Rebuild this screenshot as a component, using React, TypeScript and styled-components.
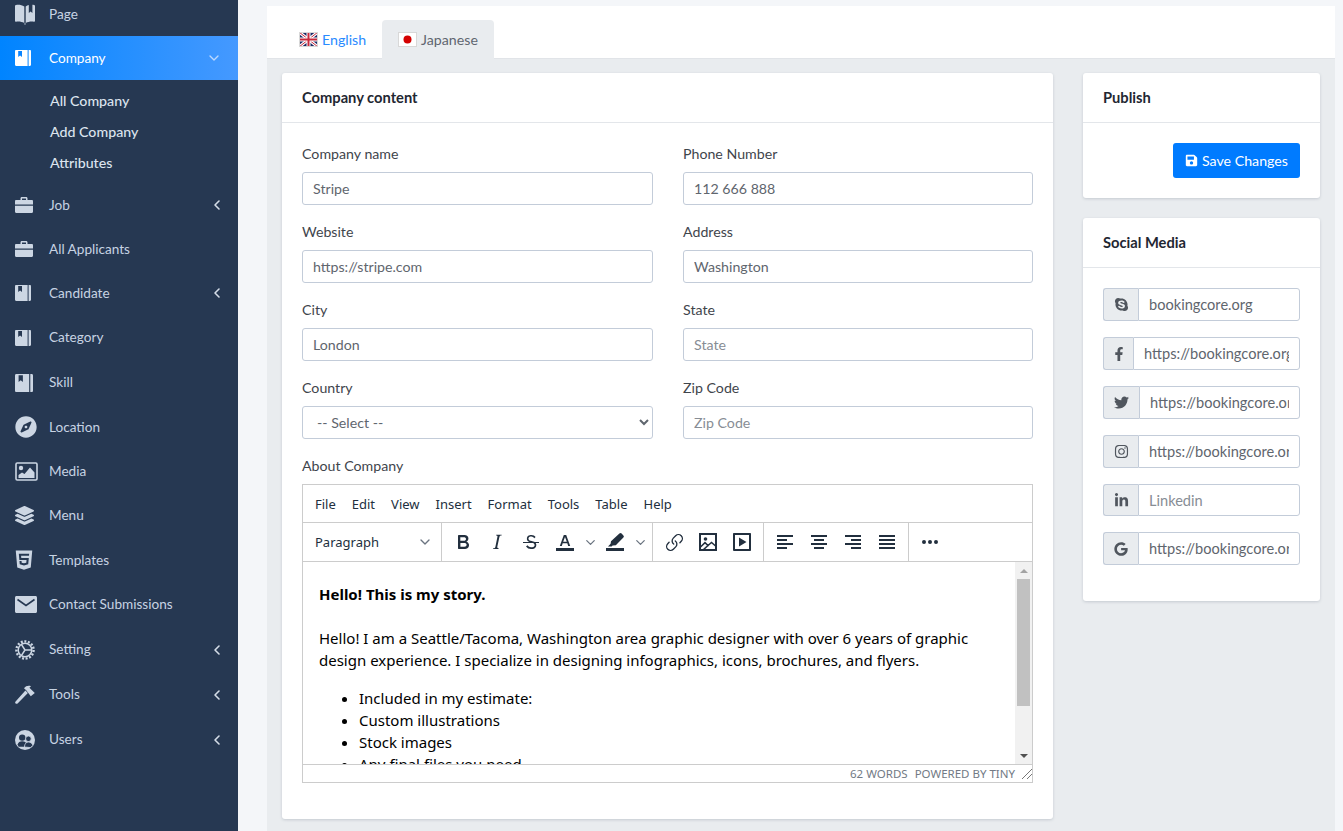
import React from 'react';
import styled, { createGlobalStyle } from 'styled-components';
import { ChevronDown, ChevronLeft, Link as LinkIcon } from 'lucide-react';
import {
  FaSkype,
  FaFacebookF,
  FaTwitter,
  FaInstagram,
  FaLinkedinIn,
  FaGoogle,
  FaCompass,
  FaLayerGroup,
  FaHtml5,
  FaSave,
} from 'react-icons/fa';

const UI_FONT = `Lato, "Noto Sans", sans-serif`;
const EDITOR_FONT = `"Noto Sans", "Open Sans", sans-serif`;
const ICON_COLOR = '#ccd6e3';
const TOOL_COLOR = '#222f3e';

const GlobalStyle = createGlobalStyle`
  html, body {
    margin: 0;
    height: 831px;
    overflow: hidden;
    background: #f4f6f9;
    font-family: ${UI_FONT};
    font-size: 14.2px;
    color: #3a3f45;
  }
  * { box-sizing: border-box; }
`;

const Shell = styled.div`
  display: flex;
  height: 831px;
  overflow: hidden;
`;

const Sidebar = styled.aside`
  width: 238px;
  flex: none;
  background: #263852;
  overflow: hidden;
`;

const NavList = styled.nav`
  margin-top: -8px;
`;

const NavRow = styled.div<{ $active?: boolean; $h?: number }>`
  display: flex;
  align-items: center;
  height: ${(p) => p.$h ?? 44}px;
  padding-left: 15px;
  color: ${(p) => (p.$active ? '#ffffff' : '#c7d3e3')};
  background: ${(p) =>
    p.$active ? 'linear-gradient(to right, #0084ff, #4599ff)' : 'transparent'};
`;

const NavIcon = styled.span<{ $active?: boolean }>`
  width: 34px;
  flex: none;
  display: flex;
  align-items: center;
  color: ${(p) => (p.$active ? '#ffffff' : ICON_COLOR)};
`;

const NavLabel = styled.span`
  flex: 1;
  align-self: flex-start;
  margin-top: 14px;
  font-size: 13.6px;
`;

const NavArrow = styled.span<{ $down?: boolean }>`
  display: flex;
  width: 16px;
  margin-right: ${(p) => (p.$down ? '16px' : '13px')};
  color: ${(p) => (p.$down ? '#bcd8ff' : '#d5dde8')};
`;

const SubNav = styled.div`
  padding: 5px 0;
`;

const SubItem = styled.div`
  height: 31px;
  line-height: 31px;
  padding-left: 50px;
  font-size: 14.2px;
  font-weight: 500;
  color: #dce4ee;
`;

const Main = styled.main`
  flex: 1;
  min-width: 0;
  padding: 6px 8px 0 29px;
`;

const Panel = styled.div`
  height: 900px;
  background: #e9ecef;
  border-radius: 3px 3px 0 0;
`;

const TabBar = styled.div`
  display: flex;
  height: 53px;
  padding: 14px 0 0 16px;
  background: #ffffff;
  border-bottom: 1px solid #e1e4e8;
`;

const Tab = styled.div<{ $active?: boolean }>`
  display: flex;
  align-items: center;
  gap: 4px;
  height: 39px;
  padding: 0 16px;
  border-radius: 4px 4px 0 0;
  font-size: 14.2px;
  color: ${(p) => (p.$active ? '#5f6670' : '#2a8bff')};
  background: ${(p) => (p.$active ? '#e9ecef' : 'transparent')};
`;

const Columns = styled.div`
  display: grid;
  grid-template-columns: 771px 237px;
  gap: 30px;
  padding: 14px 15px 15px;
  align-items: start;
`;

const SideColumn = styled.div`
  display: flex;
  flex-direction: column;
  gap: 20px;
`;

const Card = styled.section`
  background: #ffffff;
  border-radius: 3px;
  box-shadow: 0 1px 3px rgba(60, 70, 90, 0.2);
`;

const CardHead = styled.h2`
  margin: 0;
  height: 50px;
  padding: 0 20px;
  line-height: 49px;
  font-size: 14.7px;
  font-weight: 700;
  color: #1f2732;
  border-bottom: 1px solid #e3e6ea;
`;

const CardBody = styled.div`
  padding: 20px;
`;

const FormGrid = styled.div`
  display: grid;
  grid-template-columns: 351px 350px;
  column-gap: 30px;
`;

const Field = styled.div`
  margin-bottom: 16px;
`;

const Label = styled.label`
  display: block;
  height: 21px;
  line-height: 21px;
  margin-bottom: 8px;
  font-size: 14.2px;
  color: #3f454c;
`;

const TextInput = styled.input`
  display: block;
  width: 100%;
  height: 33px;
  padding: 0 10px;
  border: 1px solid #c3ccd9;
  border-radius: 3px;
  background: #ffffff;
  font-family: ${UI_FONT};
  font-size: 14.2px;
  color: #5f666e;
  outline: none;
  &::placeholder {
    color: #878d95;
    opacity: 1;
  }
`;

const SelectInput = styled.select`
  display: block;
  width: 100%;
  height: 33px;
  padding: 0 10px;
  border: 1px solid #c3ccd9;
  border-radius: 3px;
  background: #ffffff;
  font-family: ${UI_FONT};
  font-size: 14.2px;
  color: #5f666e;
`;

const Editor = styled.div`
  border: 1px solid #cccccc;
  font-family: ${EDITOR_FONT};
`;

const MenuBar = styled.div`
  display: flex;
  align-items: center;
  height: 38px;
  padding-left: 4px;
  border-bottom: 1px solid #cccccc;
`;

const MenuItem = styled.span`
  padding: 0 8px;
  font-size: 13px;
  color: #222f3e;
`;

const ToolBar = styled.div`
  display: flex;
  height: 39px;
  border-bottom: 1px solid #cccccc;
`;

const ToolGroup = styled.div<{ $w: number }>`
  display: flex;
  align-items: center;
  width: ${(p) => p.$w}px;
  padding: 0 4px;
  border-right: 1px solid #cccccc;
  &:last-child {
    border-right: none;
  }
`;

const BlockSelect = styled.div`
  display: flex;
  align-items: center;
  justify-content: space-between;
  width: 100%;
  padding: 0 4px 0 8px;
  font-size: 13px;
  color: #222f3e;
`;

const ToolBtn = styled.span`
  display: flex;
  align-items: center;
  justify-content: center;
  width: 34px;
  height: 34px;
  flex: none;
  color: ${TOOL_COLOR};
`;

const ToolChevron = styled.span`
  display: flex;
  align-items: center;
  justify-content: center;
  width: 16px;
  flex: none;
  color: #6a7480;
`;

const EditorBody = styled.div`
  display: flex;
  height: 202px;
`;

const EditorText = styled.div`
  flex: 1;
  min-width: 0;
  overflow: hidden;
  padding: 21px 16px 0;
  font-size: 15px;
  line-height: 22px;
  color: #000000;
  p {
    margin: 0 0 16px;
  }
  p:first-child {
    margin-bottom: 22px;
  }
  ul {
    margin: 0;
    padding-left: 40px;
  }
`;

const ScrollTrack = styled.div`
  width: 17px;
  flex: none;
  display: flex;
  flex-direction: column;
  align-items: center;
  background: #f1f1f1;
`;

const ScrollArrow = styled.span<{ $down?: boolean }>`
  height: 17px;
  display: flex;
  align-items: center;
  justify-content: center;
  margin-top: ${(p) => (p.$down ? 'auto' : '0')};
  &::before {
    content: '';
    border-left: 4px solid transparent;
    border-right: 4px solid transparent;
    ${(p) =>
      p.$down ? 'border-top: 4px solid #505050;' : 'border-bottom: 4px solid #a3a3a3;'}
  }
`;

const ScrollThumb = styled.div`
  width: 13px;
  height: 127px;
  background: #c1c1c1;
`;

const StatusBar = styled.div`
  display: flex;
  align-items: center;
  justify-content: flex-end;
  gap: 7px;
  height: 18px;
  border-top: 1px solid #cccccc;
  font-size: 11.5px;
  color: #727a85;
`;

const InputGroup = styled.div<{ $h?: number }>`
  display: flex;
  height: ${(p) => p.$h ?? 33}px;
  margin-bottom: 16px;
`;

const Addon = styled.span<{ $w: number }>`
  display: flex;
  align-items: center;
  justify-content: center;
  width: ${(p) => p.$w}px;
  flex: none;
  color: #50565e;
  background: #e9ecef;
  border: 1px solid #c3ccd9;
  border-right: none;
  border-radius: 3px 0 0 3px;
`;

const GroupInput = styled(TextInput)`
  flex: 1;
  min-width: 0;
  height: 100%;
  font-size: 14.6px;
  border-radius: 0 3px 3px 0;
`;

const Actions = styled.div`
  display: flex;
  justify-content: flex-end;
`;

const SaveButton = styled.button`
  display: flex;
  align-items: center;
  justify-content: center;
  gap: 4px;
  height: 35px;
  width: 127px;
  padding: 0;
  border: none;
  border-radius: 3px;
  background: #007bff;
  color: #ffffff;
  font-family: ${UI_FONT};
  font-size: 14.2px;
`;

const BookIcon = ({ big, mark }: { big?: boolean; mark?: string }) => (
  <svg width={big ? 18 : 16} height={big ? 18 : 16} viewBox="0 0 16 16" fill="currentColor">
    <path d="M1.2 0H12.6V16H1.2C.5 16 0 15.5 0 14.8V1.2C0 .5.5 0 1.2 0Z" />
    <path d="M13.6 0H14.8C15.5 0 16 .5 16 1.2V14.8C16 15.5 15.5 16 14.8 16H13.6Z" />
    <path d="M3.2 1H7V7L5.1 5.6 3.2 7Z" fill={mark ?? '#263852'} />
  </svg>
);

const OpenBookIcon = () => (
  <svg width="20" height="21" viewBox="0 0 20 21" fill="currentColor">
    <path d="M1 1C3.6.4 6.6.9 9.3 2.4V19C6.6 17.6 3.6 17.1 1 17.8 .4 17.9 0 17.5 0 17V2C0 1.5.4 1.1 1 1Z" />
    <path d="M10.7 2.4C11.7 1.8 12.8 1.4 13.8 1.1V9L15.6 7.6 17.4 9V.7C17.9.7 18.5.8 19 1 19.6 1.1 20 1.5 20 2V17C20 17.5 19.6 17.9 19 17.8 16.4 17.1 13.4 17.6 10.7 19Z" />
    <path d="M9 19.4H11L10 21Z" />
  </svg>
);

const CaseIcon = () => (
  <svg width="18" height="16" viewBox="0 0 18 16" fill="currentColor">
    <path d="M5.5 3V1.4C5.5.6 6.1 0 6.9 0H11.1C11.9 0 12.5.6 12.5 1.4V3H11V1.5H7V3Z" />
    <path d="M1.2 3H16.8C17.5 3 18 3.5 18 4.2V7.5H0V4.2C0 3.5.5 3 1.2 3Z" />
    <path d="M0 8.8H18V14.8C18 15.5 17.5 16 16.8 16H1.2C.5 16 0 15.5 0 14.8Z" />
  </svg>
);

const PictureIcon = () => (
  <svg width="23" height="19" viewBox="0 0 23 19" fill="none">
    <rect x="1" y="1" width="21" height="17" rx="1.2" stroke="currentColor" strokeWidth="1.6" />
    <circle cx="6" cy="6" r="2.2" fill="currentColor" />
    <path d="M3.5 16V13L7 10.5 9.5 12 15 5.5 19.5 10.5V16Z" fill="currentColor" />
  </svg>
);

const MailIcon = () => (
  <svg width="22" height="17" viewBox="0 0 22 17">
    <path d="M1.5 0H20.5C21.3 0 22 .7 22 1.5V15.5C22 16.3 21.3 17 20.5 17H1.5C.7 17 0 16.3 0 15.5V1.5C0 .7.7 0 1.5 0Z" fill="currentColor" />
    <path d="M2.5 3.5L11 9.5 19.5 3.5" fill="none" stroke="#263852" strokeWidth="1.6" />
  </svg>
);

const GearIcon = () => (
  <svg width="20" height="20" viewBox="0 0 20 20" fill="none" stroke="currentColor">
    <circle cx="10" cy="10" r="8.6" strokeWidth="2.4" strokeDasharray="2 1.6" />
    <circle cx="10" cy="10" r="6.8" strokeWidth="1.5" />
    <path d="M10 10L16 10M10 10L6.5 4.6M10 10L6.5 15.4" strokeWidth="1.5" />
  </svg>
);

const HammerIcon = () => (
  <svg width="20" height="19" viewBox="0 0 20 19" fill="currentColor">
    <path d="M9 3.2C10.6 1 13.6.2 16 1.2L14.4 2.8 19.8 8 15.8 11.2 11.2 5.2Z" />
    <path d="M10.4 5.6L12.9 8 2.6 18.4C2 19 1.2 19 .6 18.4 0 17.8 0 17 .6 16.4Z" />
  </svg>
);

const UsersIcon = () => (
  <svg width="20" height="20" viewBox="0 0 20 20">
    <circle cx="10" cy="10" r="10" fill="currentColor" />
    <circle cx="7.2" cy="7.6" r="3.2" fill="#263852" />
    <path d="M2.6 14.6C3 12.4 5 11.2 7.2 11.2S11.4 12.4 11.8 14.6L10.8 16.8H3.6Z" fill="#263852" />
    <circle cx="13.4" cy="8.8" r="2.8" fill="#263852" stroke="#ccd6e3" strokeWidth=".8" />
    <path d="M9.4 17C9.6 13.8 11.2 12 13.4 12S17.4 13.4 17.8 15.4L15.6 17.6Z" fill="#263852" stroke="#ccd6e3" strokeWidth=".8" />
  </svg>
);

type NavEntry = { label: string; icon: React.ReactNode; arrow?: boolean; h?: number };

const lowerNav: NavEntry[] = [
  { label: 'Job', icon: <CaseIcon />, arrow: true },
  { label: 'All Applicants', icon: <CaseIcon /> },
  { label: 'Candidate', icon: <BookIcon />, arrow: true },
  { label: 'Category', icon: <BookIcon />, h: 45 },
  { label: 'Skill', icon: <BookIcon big />, h: 45 },
  { label: 'Location', icon: <FaCompass size={22} /> },
  { label: 'Media', icon: <PictureIcon /> },
  { label: 'Menu', icon: <FaLayerGroup size={19} />, h: 45 },
  { label: 'Templates', icon: <FaHtml5 size={22} style={{ marginLeft: -2 }} /> },
  { label: 'Contact Submissions', icon: <MailIcon />, h: 45 },
  { label: 'Setting', icon: <GearIcon />, arrow: true, h: 45 },
  { label: 'Tools', icon: <HammerIcon />, arrow: true, h: 45 },
  { label: 'Users', icon: <UsersIcon />, arrow: true, h: 45 },
];

const UkFlag = () => (
  <svg width="19" height="15" viewBox="0 0 19 15">
    <rect width="19" height="15" fill="#1a2a66" />
    <path d="M0 0L19 15M19 0L0 15" stroke="#fff" strokeWidth="3" />
    <path d="M0 0L19 15M19 0L0 15" stroke="#c8283c" strokeWidth="1" />
    <path d="M9.5 0V15M0 7.5H19" stroke="#fff" strokeWidth="4" />
    <path d="M9.5 0V15M0 7.5H19" stroke="#c8283c" strokeWidth="2" />
    <rect x=".5" y=".5" width="18" height="14" fill="none" stroke="#d8d8d8" />
  </svg>
);

const JpFlag = () => (
  <svg width="19" height="15" viewBox="0 0 19 15">
    <rect width="19" height="15" fill="#fff" />
    <circle cx="9.5" cy="7.5" r="4" fill="#d40000" />
    <rect x=".5" y=".5" width="18" height="14" fill="none" stroke="#d8d8d8" />
  </svg>
);

const Tool = ({ d }: { d: string }) => (
  <svg width="24" height="24" viewBox="0 0 24 24" fill="currentColor">
    <path d={d} />
  </svg>
);

const ImageTool = () => (
  <svg width="24" height="24" viewBox="0 0 24 24" fill="none" stroke="currentColor">
    <rect x="4" y="4" width="16" height="16" strokeWidth="2" />
    <circle cx="9.5" cy="9" r="1.8" fill="currentColor" stroke="none" />
    <path d="M4.5 17L9 12.6 12 15.5 15.5 12.5 19.6 16" strokeWidth="1.5" />
    <path d="M7.5 19.6L12 15.5" strokeWidth="1.5" />
  </svg>
);

const BOLD =
  'M7.8 19c-.3 0-.5 0-.6-.2l-.2-.5V5.7c0-.2 0-.4.2-.5l.6-.2h5c1.5 0 2.7.3 3.5 1 .7.6 1.1 1.4 1.1 2.5a3 3 0 0 1-.6 1.9c-.4.6-1 1-1.6 1.2.4.1.9.3 1.3.6s.8.7 1 1.2c.4.4.5 1 .5 1.6 0 1.3-.4 2.3-1.3 3-.8.7-2.1 1-3.8 1H7.8zm5-8.3c.6 0 1.2-.1 1.6-.5.4-.3.6-.7.6-1.3 0-1.1-.8-1.7-2.4-1.7H9.3v3.5h3.5zm.5 6c.7 0 1.3-.1 1.7-.4.4-.4.6-.9.6-1.5s-.2-1-.7-1.4c-.4-.3-1-.4-2-.4H9.4v3.8h4z';
const ITALIC =
  'M16.7 4.7l-.1.9h-.3c-.6 0-1 0-1.4.3-.3.3-.4.6-.5 1.1l-2.1 9.8v.6c0 .5.4.8 1.2.8h.2l-.2.8H8l.2-.8h.2c1.1 0 1.8-.5 2-1.5l2-9.8.1-.5c0-.6-.4-.8-1.2-.8h-.3l.2-.9h5.8z';
const STRIKE =
  'M15.6 8.5c-.5-.7-1-1.1-1.3-1.3-.6-.4-1.3-.6-2-.6-2.7 0-2.8 1.7-2.8 2.1 0 1.6 1.8 2 3.2 2.3 4.4.9 4.6 2.8 4.6 3.9 0 1.4-.7 4.1-5 4.1A6.2 6.2 0 0 1 7 16.4l1.5-1.1c.4.6 1.6 2 3.7 2 1.6 0 2.5-.4 3-1 .3-.4.4-.9.4-1.3 0-1.6-1.8-2.1-3.2-2.4-4.2-.9-4.5-2.7-4.5-3.8 0-3 2.1-3.9 4.5-3.9.9 0 1.8.2 2.5.6.7.4 1.3 1 1.7 1.5l-1.1 1zM4 12h16v1H4z';
const TEXT_COLOR = 'M3 18h18v3H3zM10.8 5h2.4l4 11h-2l-.9-2.7H9.7L8.8 16h-2zm-.6 6.7h3.6L12 6.9z';
const HIGHLIGHT =
  'M3 18h18v3H3zM16.4 3.6a1.6 1.6 0 0 1 2.2 0l1.8 1.8a1.6 1.6 0 0 1 0 2.2l-7.6 7.6-3.2.4-1 1H5l2.6-2.8.4-2.6z';
const MEDIA =
  'M4 3h16c.6 0 1 .4 1 1v16c0 .6-.4 1-1 1H4a1 1 0 0 1-1-1V4c0-.6.4-1 1-1zm1 2v14h14V5zm4 2.5l7.5 4.5L9 16.5z';
const ALIGN_LEFT = 'M4 5h16v2H4zM4 9h10v2H4zM4 13h16v2H4zM4 17h10v2H4z';
const ALIGN_CENTER = 'M4 5h16v2H4zM7 9h10v2H7zM4 13h16v2H4zM7 17h10v2H7z';
const ALIGN_RIGHT = 'M4 5h16v2H4zM10 9h10v2H10zM4 13h16v2H4zM10 17h10v2H10z';
const ALIGN_JUSTIFY = 'M4 5h16v2H4zM4 9h16v2H4zM4 13h16v2H4zM4 17h16v2H4z';
const MORE = 'M4 12a2 2 0 1 1 4 0 2 2 0 0 1-4 0zm6 0a2 2 0 1 1 4 0 2 2 0 0 1-4 0zm6 0a2 2 0 1 1 4 0 2 2 0 0 1-4 0z';

const socials = [
  { icon: <FaSkype size={15} />, w: 35, value: 'bookingcore.org' },
  { icon: <FaFacebookF size={14} />, w: 30, value: 'https://bookingcore.org' },
  { icon: <FaTwitter size={15} />, w: 36, value: 'https://bookingcore.org' },
  { icon: <FaInstagram size={15} />, w: 35, value: 'https://bookingcore.org' },
  { icon: <FaLinkedinIn size={15} />, w: 35, placeholder: 'Linkedin', h: 32 },
  { icon: <FaGoogle size={14} />, w: 35, value: 'https://bookingcore.org' },
];

const menus = ['File', 'Edit', 'View', 'Insert', 'Format', 'Tools', 'Table', 'Help'];

const fields = [
  { label: 'Company name', value: 'Stripe' },
  { label: 'Phone Number', value: '112 666 888' },
  { label: 'Website', value: 'https://stripe.com' },
  { label: 'Address', value: 'Washington' },
  { label: 'City', value: 'London' },
  { label: 'State', placeholder: 'State' },
];

export default function App() {
  return (
    <>
      <GlobalStyle />
      <Shell>
        <Sidebar>
          <NavList>
            <NavRow>
              <NavIcon>
                <OpenBookIcon />
              </NavIcon>
              <NavLabel>Page</NavLabel>
            </NavRow>
            <NavRow $active>
              <NavIcon $active>
                <BookIcon mark="#0a84ff" />
              </NavIcon>
              <NavLabel>Company</NavLabel>
              <NavArrow $down>
                <ChevronDown size={16} />
              </NavArrow>
            </NavRow>
            <SubNav>
              <SubItem>All Company</SubItem>
              <SubItem>Add Company</SubItem>
              <SubItem>Attributes</SubItem>
            </SubNav>
            {lowerNav.map((item) => (
              <NavRow key={item.label} $h={item.h}>
                <NavIcon>{item.icon}</NavIcon>
                <NavLabel>{item.label}</NavLabel>
                {item.arrow && (
                  <NavArrow>
                    <ChevronLeft size={16} strokeWidth={2.4} />
                  </NavArrow>
                )}
              </NavRow>
            ))}
          </NavList>
        </Sidebar>
        <Main>
          <Panel>
            <TabBar>
              <Tab>
                <UkFlag />
                English
              </Tab>
              <Tab $active>
                <JpFlag />
                Japanese
              </Tab>
            </TabBar>
            <Columns>
              <Card>
                <CardHead>Company content</CardHead>
                <CardBody>
                  <FormGrid>
                    {fields.map((f) => (
                      <Field key={f.label}>
                        <Label>{f.label}</Label>
                        <TextInput readOnly value={f.value} placeholder={f.placeholder} />
                      </Field>
                    ))}
                    <Field>
                      <Label>Country</Label>
                      <SelectInput defaultValue="">
                        <option value="">-- Select --</option>
                      </SelectInput>
                    </Field>
                    <Field>
                      <Label>Zip Code</Label>
                      <TextInput readOnly placeholder="Zip Code" />
                    </Field>
                  </FormGrid>
                  <Field>
                    <Label>About Company</Label>
                    <Editor>
                      <MenuBar>
                        {menus.map((m) => (
                          <MenuItem key={m}>{m}</MenuItem>
                        ))}
                      </MenuBar>
                      <ToolBar>
                        <ToolGroup $w={139}>
                          <BlockSelect>
                            Paragraph
                            <ChevronDown size={16} color="#6a7480" />
                          </BlockSelect>
                        </ToolGroup>
                        <ToolGroup $w={211}>
                          <ToolBtn>
                            <Tool d={BOLD} />
                          </ToolBtn>
                          <ToolBtn>
                            <Tool d={ITALIC} />
                          </ToolBtn>
                          <ToolBtn>
                            <Tool d={STRIKE} />
                          </ToolBtn>
                          <ToolBtn>
                            <Tool d={TEXT_COLOR} />
                          </ToolBtn>
                          <ToolChevron>
                            <ChevronDown size={15} />
                          </ToolChevron>
                          <ToolBtn>
                            <Tool d={HIGHLIGHT} />
                          </ToolBtn>
                          <ToolChevron>
                            <ChevronDown size={15} />
                          </ToolChevron>
                        </ToolGroup>
                        <ToolGroup $w={111}>
                          <ToolBtn>
                            <LinkIcon size={19} strokeWidth={1.7} style={{ transform: 'scaleX(-1) rotate(90deg)' }} />
                          </ToolBtn>
                          <ToolBtn>
                            <ImageTool />
                          </ToolBtn>
                          <ToolBtn>
                            <Tool d={MEDIA} />
                          </ToolBtn>
                        </ToolGroup>
                        <ToolGroup $w={145}>
                          <ToolBtn>
                            <Tool d={ALIGN_LEFT} />
                          </ToolBtn>
                          <ToolBtn>
                            <Tool d={ALIGN_CENTER} />
                          </ToolBtn>
                          <ToolBtn>
                            <Tool d={ALIGN_RIGHT} />
                          </ToolBtn>
                          <ToolBtn>
                            <Tool d={ALIGN_JUSTIFY} />
                          </ToolBtn>
                        </ToolGroup>
                        <ToolGroup $w={123}>
                          <ToolBtn>
                            <Tool d={MORE} />
                          </ToolBtn>
                        </ToolGroup>
                      </ToolBar>
                      <EditorBody>
                        <EditorText>
                          <p>
                            <strong>Hello! This is my story.</strong>
                          </p>
                          <p>
                            Hello! I am a Seattle/Tacoma, Washington area graphic designer with over 6
                            years of graphic design experience. I specialize in designing infographics,
                            icons, brochures, and flyers.
                          </p>
                          <ul>
                            <li>Included in my estimate:</li>
                            <li>Custom illustrations</li>
                            <li>Stock images</li>
                            <li>Any final files you need</li>
                          </ul>
                        </EditorText>
                        <ScrollTrack>
                          <ScrollArrow />
                          <ScrollThumb />
                          <ScrollArrow $down />
                        </ScrollTrack>
                      </EditorBody>
                      <StatusBar>
                        <span>62 WORDS</span>
                        <span>POWERED BY TINY</span>
                        <svg width="10" height="10" viewBox="0 0 10 10" stroke="#777" fill="none">
                          <path d="M0 10L10 0M5 10L10 5" />
                        </svg>
                      </StatusBar>
                    </Editor>
                  </Field>
                </CardBody>
              </Card>
              <SideColumn>
                <Card>
                  <CardHead>Publish</CardHead>
                  <CardBody>
                    <Actions>
                      <SaveButton>
                        <FaSave size={13} />
                        Save Changes
                      </SaveButton>
                    </Actions>
                  </CardBody>
                </Card>
                <Card>
                  <CardHead>Social Media</CardHead>
                  <CardBody>
                    {socials.map((s, i) => (
                      <InputGroup key={i} $h={s.h}>
                        <Addon $w={s.w}>{s.icon}</Addon>
                        <GroupInput readOnly value={s.value} placeholder={s.placeholder} />
                      </InputGroup>
                    ))}
                  </CardBody>
                </Card>
              </SideColumn>
            </Columns>
          </Panel>
        </Main>
      </Shell>
    </>
  );
}
